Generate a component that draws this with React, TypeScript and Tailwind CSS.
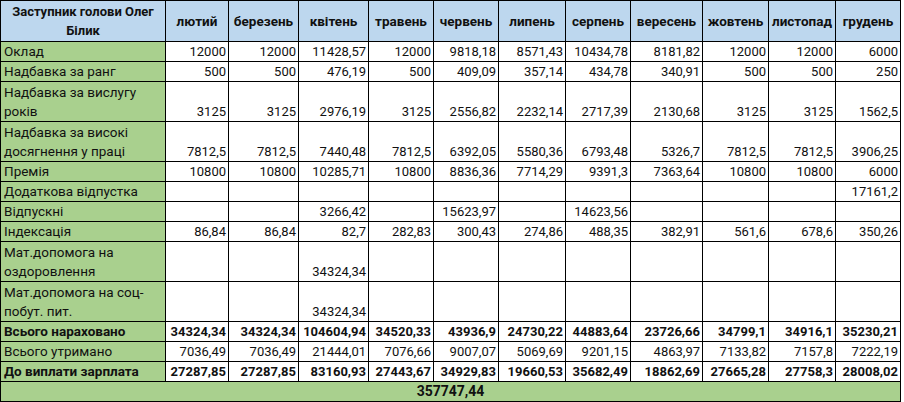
const months = [
  "лютий",
  "березень",
  "квітень",
  "травень",
  "червень",
  "липень",
  "серпень",
  "вересень",
  "жовтень",
  "листопад",
  "грудень",
];

const colWidths = [165, 63, 70, 70, 65, 65, 67, 65, 72, 66, 67, 65];

type Row = {
  label: string[];
  values: string[];
  bold?: boolean;
  tall?: boolean;
};

const e = "";

const rows: Row[] = [
  { label: ["Оклад"], values: ["12000", "12000", "11428,57", "12000", "9818,18", "8571,43", "10434,78", "8181,82", "12000", "12000", "6000"] },
  { label: ["Надбавка за ранг"], values: ["500", "500", "476,19", "500", "409,09", "357,14", "434,78", "340,91", "500", "500", "250"] },
  { label: ["Надбавка за вислугу", "років"], tall: true, values: ["3125", "3125", "2976,19", "3125", "2556,82", "2232,14", "2717,39", "2130,68", "3125", "3125", "1562,5"] },
  { label: ["Надбавка за високі", "досягнення у праці"], tall: true, values: ["7812,5", "7812,5", "7440,48", "7812,5", "6392,05", "5580,36", "6793,48", "5326,7", "7812,5", "7812,5", "3906,25"] },
  { label: ["Премія"], values: ["10800", "10800", "10285,71", "10800", "8836,36", "7714,29", "9391,3", "7363,64", "10800", "10800", "6000"] },
  { label: ["Додаткова відпустка"], values: [e, e, e, e, e, e, e, e, e, e, "17161,2"] },
  { label: ["Відпускні"], values: [e, e, "3266,42", e, "15623,97", e, "14623,56", e, e, e, e] },
  { label: ["Індексація"], values: ["86,84", "86,84", "82,7", "282,83", "300,43", "274,86", "488,35", "382,91", "561,6", "678,6", "350,26"] },
  { label: ["Мат.допомога на", "оздоровлення"], tall: true, values: [e, e, "34324,34", e, e, e, e, e, e, e, e] },
  { label: ["Мат.допомога на соц-", "побут. пит."], tall: true, values: [e, e, "34324,34", e, e, e, e, e, e, e, e] },
  { label: ["Всього нараховано"], bold: true, values: ["34324,34", "34324,34", "104604,94", "34520,33", "43936,9", "24730,22", "44883,64", "23726,66", "34799,1", "34916,1", "35230,21"] },
  { label: ["Всього утримано"], values: ["7036,49", "7036,49", "21444,01", "7076,66", "9007,07", "5069,69", "9201,15", "4863,97", "7133,82", "7157,8", "7222,19"] },
  { label: ["До виплати зарплата"], bold: true, values: ["27287,85", "27287,85", "83160,93", "27443,67", "34929,83", "19660,53", "35682,49", "18862,69", "27665,28", "27758,3", "28008,02"] },
];

export default function App() {
  return (
    <div className="w-[904px] h-[402px] overflow-hidden bg-white font-['Roboto',sans-serif] text-[13px] text-[#111]">
      <table className="table-fixed border-collapse w-[901px]">
        <colgroup>
          {colWidths.map((w, i) => (
            <col key={i} style={{ width: w }} />
          ))}
        </colgroup>
        <thead>
          <tr className="h-[41px] bg-[#bdd7ee]">
            <th className="border border-black px-1 text-center align-middle font-bold leading-[19px]">
              Заступник голови Олег
              <br />
              Білик
            </th>
            {months.map((m) => (
              <th key={m} className="border border-black px-0.5 text-center align-middle font-bold text-[13.5px]">
                {m}
              </th>
            ))}
          </tr>
        </thead>
        <tbody>
          {rows.map((r, i) => (
            <tr key={i} className={r.tall ? "h-[40px]" : "h-[20px]"}>
              <td
                className={`border border-black bg-[#a9d08e] px-[3px] text-left align-bottom leading-[19px] whitespace-nowrap text-[13.5px] ${
                  r.bold ? "font-bold" : ""
                }`}
              >
                {r.label.map((l, j) => (
                  <div key={j}>{l}</div>
                ))}
              </td>
              {r.values.map((v, j) => (
                <td
                  key={j}
                  className={`border border-black px-[2px] text-right align-bottom leading-[19px] whitespace-nowrap ${
                    r.bold ? "font-bold" : ""
                  }`}
                >
                  {v}
                </td>
              ))}
            </tr>
          ))}
          <tr className="h-[20px] bg-[#a9d08e]">
            <td colSpan={12} className="border border-black text-center align-bottom font-bold leading-[19px] text-[14px]">
              357747,44
            </td>
          </tr>
        </tbody>
      </table>
    </div>
  );
}
